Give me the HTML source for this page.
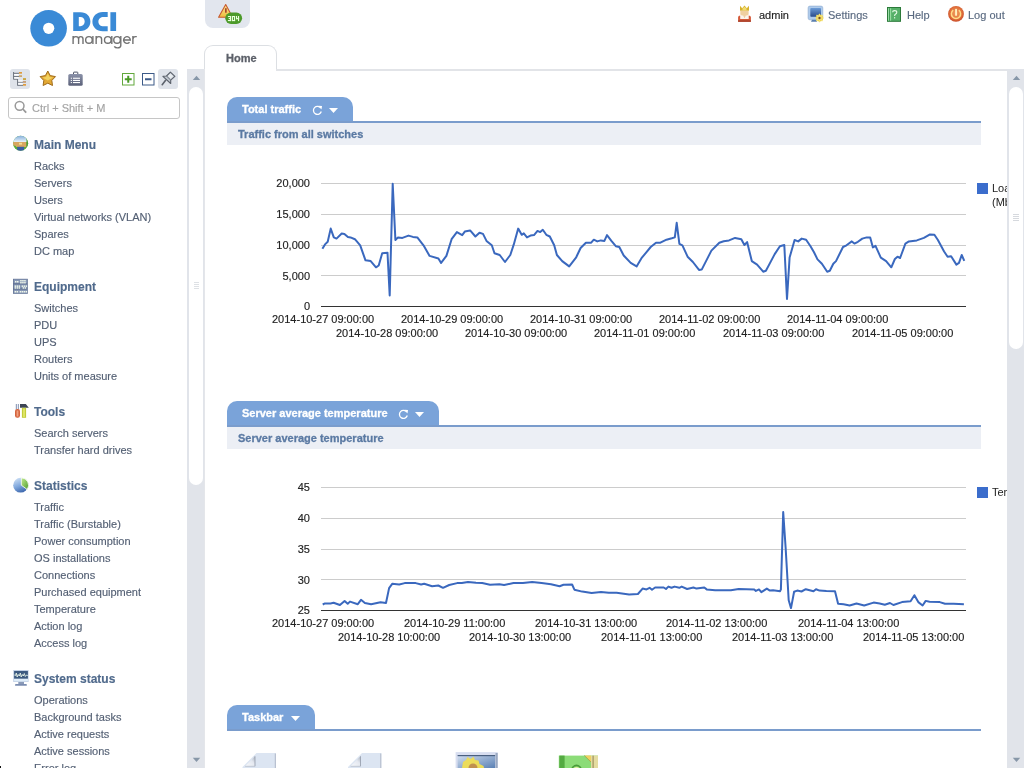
<!DOCTYPE html><html><head><meta charset="utf-8"><style>

*{margin:0;padding:0;box-sizing:border-box}
html,body{width:1024px;height:768px;overflow:hidden;background:#fff;font-family:"Liberation Sans", sans-serif}
.a{position:absolute}
.t{position:absolute;height:0;line-height:0;white-space:nowrap;will-change:transform}
.t span{display:inline-block;line-height:0;vertical-align:baseline}

</style></head><body>
<svg class="a" style="left:0px;top:0px" width="150" height="60" viewBox="0 0 150 60">
<circle cx="48.6" cy="28.3" r="18.3" fill="#3a8ad6"/>
<circle cx="48.7" cy="28.3" r="5.6" fill="#fff"/>
<path fill="#3a8ad6" fill-rule="evenodd" d="M73.2 12.2 H80.6 C86.6 12.2 90.4 16.2 90.4 21.6 C90.4 27 86.6 31 80.6 31 H73.2 Z M78.8 17 H80.3 C83 17 84.7 19 84.7 21.6 C84.7 24.3 83 26.3 80.3 26.3 H78.8 Z"/>
<path fill="#3a8ad6" d="M107.7 17.1 H103.6 C100.6 17.1 98.4 19.1 98.4 21.65 C98.4 24.3 100.6 26.3 103.6 26.3 H107.7 V31.2 H102.8 C96.6 31.2 92.4 27 92.4 21.65 C92.4 16.3 96.6 12 102.8 12 H107.7 Z"/>
<rect x="110.4" y="12.2" width="5.7" height="18.8" fill="#3a8ad6"/>
</svg>
<svg class="a" style="left:60px;top:30px" width="85" height="22" viewBox="60 30 85 22"><g fill="none" stroke="#727272" stroke-width="1.4">
<path d="M73.1 35.9 V44 M73.1 39 Q73.1 36.6 75.85 36.6 Q78.6 36.6 78.6 39 V44 M78.6 39 Q78.6 36.6 80.8 36.6 Q83 36.6 83 39 V44"/>
<circle cx="88.95" cy="39.95" r="3.3"/><path d="M92.9 35.9 V44"/>
<path d="M96.15 35.9 V44 M96.15 39.2 Q96.15 36.6 98.9 36.6 Q101.6 36.6 101.6 39.2 V44"/>
<circle cx="107.8" cy="39.95" r="3.3"/><path d="M111.8 35.9 V44"/>
<circle cx="117.05" cy="39.95" r="3.3"/><path d="M120.8 35.9 V45.5 Q120.8 47.9 117.4 47.9 Q115.2 47.9 114.3 46.4"/>
<path d="M123.6 39.95 H130.3 A3.35 3.35 0 1 0 129.5 42.2"/>
<path d="M132.9 35.9 V44 M132.9 39.2 Q132.9 36.6 135.6 36.6 H136.8"/>
</g></svg>
<div class="a" style="left:205px;top:0;width:45px;height:28px;background:#e2e6ee;border-radius:0 0 8px 8px"></div>
<svg class="a" style="left:205px;top:0px" width="45" height="28" viewBox="205 0 45 28">
<defs><linearGradient id="wt" x1="0" y1="0" x2="0" y2="1"><stop offset="0" stop-color="#fbe89a"/><stop offset="1" stop-color="#eebc3a"/></linearGradient></defs>
<path d="M225.7 4.6 L232.6 17.3 L218.6 17.3 Z" fill="url(#wt)" stroke="#c85a30" stroke-width="1.1" stroke-linejoin="round"/>
<rect x="225" y="8.2" width="1.7" height="4.5" fill="#a8482a"/>
<rect x="225.3" y="12.5" width="16.8" height="11.4" rx="5.7" fill="#4c9a2a"/>
<g fill="#eaffdc">
<rect x="227.9" y="16" width="3.1" height="1.1"/><rect x="228.7" y="18" width="2.3" height="1.1"/><rect x="227.9" y="20" width="3.1" height="1.1"/><rect x="230" y="16" width="1.1" height="5.1"/>
<rect x="231.9" y="16" width="1.1" height="5.1"/><rect x="234" y="16" width="1.1" height="5.1"/><rect x="231.9" y="16" width="3.2" height="1.1"/><rect x="231.9" y="20" width="3.2" height="1.1"/>
<rect x="236" y="16" width="1.1" height="3.2"/><rect x="236" y="18.1" width="3.1" height="1.1"/><rect x="238" y="16" width="1.1" height="5.1"/>
</g>
</svg>
<svg class="a" style="left:736px;top:4px" width="18" height="20" viewBox="736 4 18 20">
<path d="M740 10.8 V5.8 L742.2 8.2 L744.5 5.6 L746.8 8.2 L749 5.8 V10.8 Z" fill="#d6b22e"/>
<path d="M742.5 8.6 L744.5 6.8 L746.5 8.6 V10.5 H742.5 Z" fill="#f2dc70"/>
<path d="M740.3 10.8 H748.6 V14.5 L744.5 18.4 L740.3 14.5 Z" fill="#efcfa0"/>
<path d="M738.1 21.8 V17.2 Q738.1 15.4 740.3 15.4 V19 H748.6 V15.4 Q750.9 15.4 750.9 17.2 V21.8 Z" fill="#d45838"/>
<path d="M740.8 15.4 H743.2 L744.5 18.4 L745.8 15.4 H748.2 V19 H740.8 Z" fill="#fbf3ea"/>
<rect x="738.1" y="20.3" width="12.8" height="1.5" fill="#a8402a"/>
</svg>
<div class="t" style="left:759px;top:15px;font-size:11px;color:#222;font-weight:normal;-webkit-text-stroke:0.15px #222;"><span>admin</span></div>
<svg class="a" style="left:806px;top:5px" width="20" height="19" viewBox="806 5 20 19">
<defs><linearGradient id="sg" x1="0" y1="0" x2="0" y2="1"><stop offset="0" stop-color="#6a9ad6"/><stop offset="1" stop-color="#2a4c8a"/></linearGradient></defs>
<rect x="808.1" y="6.1" width="14.7" height="13.7" rx="1.8" fill="#aecbec" stroke="#8aa8cc" stroke-width="0.6"/>
<rect x="810.3" y="8.1" width="10.7" height="8.6" rx="0.8" fill="url(#sg)"/>
<path d="M811 21.7 L812 19.8 H816.7 L817 21.7 Z" fill="#5a7eae"/>
<circle cx="819.5" cy="18" r="3.6" fill="#ecd24a"/>
<path d="M819.5 13.8 V22.2 M815.3 18 H823.7 M816.5 15 L822.5 21 M822.5 15 L816.5 21" stroke="#f4e27a" stroke-width="1.1"/>
<circle cx="819.5" cy="18" r="1.2" fill="#7a5020"/>
</svg>
<div class="t" style="left:828px;top:15px;font-size:11px;color:#5a6a80;font-weight:normal;-webkit-text-stroke:0.15px #5a6a80;"><span>Settings</span></div>
<svg class="a" style="left:886px;top:6px" width="17" height="18" viewBox="886 6 17 18">
<rect x="887.5" y="7.5" width="13" height="13.8" fill="#56b068" stroke="#2c7a3a" stroke-width="1"/>
<rect x="888.3" y="8.3" width="1" height="12.4" fill="#b8f0c0"/>
<rect x="889.3" y="8.3" width="0.9" height="12.4" fill="#2e8a40"/>
<rect x="890.2" y="8.3" width="0.9" height="12.4" fill="#a8e8b0"/>
<path d="M892.6 12.2 Q892.6 10.6 894.6 10.6 Q896.8 10.6 896.8 12.3 Q896.8 13.5 895.4 14.3 Q894.6 14.8 894.6 16" fill="none" stroke="#e4fae4" stroke-width="1.1"/>
<rect x="894" y="17.2" width="1.2" height="1.2" fill="#e4fae4"/>
</svg>
<div class="t" style="left:907px;top:15px;font-size:11px;color:#5a6a80;font-weight:normal;-webkit-text-stroke:0.15px #5a6a80;"><span>Help</span></div>
<svg class="a" style="left:946px;top:4px" width="20" height="20" viewBox="946 4 20 20">
<defs><radialGradient id="lg" cx="0.5" cy="0.45" r="0.55"><stop offset="0" stop-color="#f2a060"/><stop offset="0.7" stop-color="#e0703a"/><stop offset="1" stop-color="#c84a28"/></radialGradient></defs>
<circle cx="956" cy="13.9" r="7.9" fill="url(#lg)"/>
<path d="M953.2 10.2 A4.6 4.6 0 1 0 958.8 10.2" fill="none" stroke="#ffdc88" stroke-width="1.5"/>
<rect x="955.1" y="8.9" width="1.9" height="6.8" fill="#fff0c0"/>
</svg>
<div class="t" style="left:968px;top:15px;font-size:11px;color:#5a6a80;font-weight:normal;-webkit-text-stroke:0.15px #5a6a80;"><span>Log out</span></div>
<div class="a" style="left:10px;top:69px;width:20px;height:20px;background:#dfe3ea;border-radius:3px"></div>
<svg class="a" style="left:10px;top:69px" width="20" height="20" viewBox="10 69 20 20">
<path d="M13.6 72 V79.4 M13.6 73.3 H19 M13.6 76.4 H19 M13.6 79.2 H17.6 M17.6 79 V85.6 M17.6 82.1 H23 M17.6 85.3 H23" stroke="#6b717c" stroke-width="1" fill="none"/>
<rect x="14.2" y="74" width="4.5" height="1.6" fill="#fff"/><rect x="14.2" y="77.2" width="4.5" height="1.4" fill="#fff"/>
<rect x="18.2" y="80.3" width="4.5" height="1.4" fill="#fff"/><rect x="18.2" y="83.1" width="4.5" height="1.5" fill="#fff"/>
<rect x="19" y="72" width="3" height="1.7" fill="#e09c3c"/><rect x="19" y="75.3" width="3" height="1.6" fill="#c8a060"/>
<rect x="23" y="78.2" width="3" height="1.7" fill="#c8a030"/><rect x="23" y="81.2" width="3" height="1.5" fill="#c09060"/><rect x="23" y="84" width="3" height="1.7" fill="#e09c3c"/>
</svg>
<svg class="a" style="left:38px;top:69px" width="20" height="19" viewBox="38 69 20 19">
<path d="M47.8 71 L50.2 75.6 L55.5 76.6 L51.8 80.5 L52.5 85.5 L47.8 83.2 L43.1 85.5 L43.8 80.5 L40.1 76.6 L45.4 75.6 Z" fill="#e2a834" stroke="#a06c1c" stroke-width="1" stroke-linejoin="round"/>
<path d="M47.8 73.5 L49.6 76.9 L53.2 77.5 L47.8 80.5 L42.4 77.5 L46 76.9 Z" fill="#f6dc6a" opacity="0.8"/>
</svg>
<svg class="a" style="left:66px;top:70px" width="19" height="18" viewBox="66 70 19 18">
<path d="M73.5 74 V72.6 Q73.5 72.1 74 72.1 H77.3 Q77.8 72.1 77.8 72.6 V74" fill="none" stroke="#4e5468" stroke-width="1"/>
<defs><linearGradient id="bc" x1="0" y1="0" x2="0" y2="1"><stop offset="0" stop-color="#8c93aa"/><stop offset="1" stop-color="#5a6078"/></linearGradient></defs><rect x="68.3" y="73.9" width="14.4" height="11.9" rx="1.6" fill="url(#bc)"/>

<rect x="70.8" y="77.7" width="1.1" height="1.1" fill="#fff"/><rect x="73" y="77.7" width="7" height="1.1" fill="#fff"/>
<rect x="70.8" y="79.9" width="1.1" height="1.1" fill="#fff"/><rect x="73" y="79.9" width="7" height="1.1" fill="#fff"/>
<rect x="70.8" y="82" width="1.1" height="1.1" fill="#fff"/><rect x="73" y="82" width="7" height="1.1" fill="#fff"/>
</svg>
<svg class="a" style="left:121px;top:72px" width="15" height="15" viewBox="121 72 15 15">
<rect x="122.5" y="73.5" width="11.5" height="11.5" fill="#fff" stroke="#62a83c" stroke-width="1"/>
<path d="M128.25 75.8 V82.7 M124.8 79.25 H131.7" stroke="#4a9a26" stroke-width="2"/>
</svg>
<svg class="a" style="left:141px;top:72px" width="15" height="15" viewBox="141 72 15 15">
<rect x="142.5" y="73.5" width="11.5" height="11.5" fill="#fff" stroke="#3c5a88" stroke-width="1"/>
<path d="M145 79.25 H151.5" stroke="#3c5a88" stroke-width="2"/>
</svg>
<div class="a" style="left:158px;top:69px;width:20px;height:20px;background:#dfe3ea;border-radius:3px"></div>
<svg class="a" style="left:158px;top:69px" width="20" height="20" viewBox="158 69 20 20">
<path d="M162.9 76.3 L166.5 76 L170.4 72.1 L174.9 76.3 L170.7 80.1 L170.7 83.5 Z" fill="#c4cad2" stroke="#5c626c" stroke-width="1.1" stroke-linejoin="round"/>
<path d="M166.5 76 L170.7 80.1" stroke="#5c626c" stroke-width="0.9"/>
<path d="M170.4 73.6 L173.3 76.3 L170.6 78.8 L167.9 76.1 Z" fill="#e8ecf0"/>
<path d="M165.6 80.3 L162.2 84.7" stroke="#5c626c" stroke-width="1.6" stroke-linecap="round"/>
</svg>
<div class="a" style="left:8px;top:97px;width:172px;height:22px;border:1px solid #c6c6c6;border-radius:3px;background:#fff"></div>
<svg class="a" style="left:12px;top:99px" width="18" height="18" viewBox="12 99 18 18">
<circle cx="19.6" cy="105.8" r="4.4" fill="none" stroke="#999" stroke-width="1.5"/>
<path d="M22.8 109 L26.2 112.6" stroke="#999" stroke-width="1.8"/>
</svg>
<div class="t" style="left:32px;top:108px;font-size:11px;color:#a3a3a3;font-weight:normal;-webkit-text-stroke:0.15px #a3a3a3;"><span>Ctrl + Shift + M</span></div>
<svg class="a" style="left:12px;top:134px" width="18" height="18" viewBox="12 134 18 18">
<defs><clipPath id="cm"><circle cx="20.6" cy="143.3" r="7.45"/></clipPath>
<linearGradient id="sky" x1="0" y1="0" x2="0" y2="1"><stop offset="0" stop-color="#7aa8d8"/><stop offset="1" stop-color="#e8f2fa"/></linearGradient></defs>
<g clip-path="url(#cm)">
<rect x="12" y="134" width="18" height="18" fill="#5aa83e"/>
<rect x="12" y="135" width="15" height="7" fill="url(#sky)"/>
<rect x="13" y="142" width="13.5" height="5" fill="#d8a660"/>
<rect x="19" y="142.8" width="3" height="1.8" fill="#f4dc90"/>
<rect x="17.2" y="146.8" width="6.8" height="5" fill="#3a5ea2"/>
<path d="M24.5 135 Q26.5 137 26.5 139 V148 L30 148 V134 Z" fill="#4a9a34"/>
<path d="M12 145 L16 146 L17.2 152 H12 Z" fill="#5ab03e"/>
</g></svg>
<div class="t" style="left:34px;top:145px;font-size:12px;color:#506a8c;font-weight:bold;-webkit-text-stroke:0.15px #506a8c;"><span>Main Menu</span></div>
<div class="t" style="left:34px;top:166px;font-size:11px;color:#546074;font-weight:normal;-webkit-text-stroke:0.15px #546074;"><span>Racks</span></div>
<div class="t" style="left:34px;top:183px;font-size:11px;color:#546074;font-weight:normal;-webkit-text-stroke:0.15px #546074;"><span>Servers</span></div>
<div class="t" style="left:34px;top:200px;font-size:11px;color:#546074;font-weight:normal;-webkit-text-stroke:0.15px #546074;"><span>Users</span></div>
<div class="t" style="left:34px;top:217px;font-size:11px;color:#546074;font-weight:normal;-webkit-text-stroke:0.15px #546074;"><span>Virtual networks (VLAN)</span></div>
<div class="t" style="left:34px;top:234px;font-size:11px;color:#546074;font-weight:normal;-webkit-text-stroke:0.15px #546074;"><span>Spares</span></div>
<div class="t" style="left:34px;top:251px;font-size:11px;color:#546074;font-weight:normal;-webkit-text-stroke:0.15px #546074;"><span>DC map</span></div>
<svg class="a" style="left:12px;top:278px" width="17" height="17" viewBox="12 278 17 17">
<rect x="13" y="278.8" width="14.8" height="15" fill="#5f6f90"/>
<rect x="13.6" y="279.3" width="13.6" height="4" fill="#8898b6"/>
<rect x="13.6" y="284.3" width="13.6" height="4.2" fill="#7f90b0"/>
<rect x="13.6" y="289.6" width="13.6" height="3.8" fill="#8898b6"/>
<rect x="20.2" y="280" width="1.5" height="1.5" fill="#f0f8ea"/><rect x="22.2" y="280" width="1.5" height="1.5" fill="#f0f8ea"/><rect x="24.2" y="280" width="1.5" height="1.5" fill="#f0f8ea"/><rect x="20.2" y="282" width="1.5" height="1.5" fill="#f0f8ea"/><rect x="22.2" y="282" width="1.5" height="1.5" fill="#f0f8ea"/><rect x="24.2" y="282" width="1.5" height="1.5" fill="#f0f8ea"/><rect x="15" y="281" width="1.5" height="1.5" fill="#f0f8ea"/><rect x="17" y="281" width="1.5" height="1.5" fill="#f0f8ea"/><rect x="14.6" y="285.4" width="1.5" height="1.5" fill="#f0f8ea"/><rect x="16.6" y="285.4" width="1.5" height="1.5" fill="#f0f8ea"/><rect x="18.6" y="285.4" width="1.5" height="1.5" fill="#f0f8ea"/><rect x="14.6" y="287.2" width="1.5" height="1.5" fill="#f0f8ea"/><rect x="16.6" y="287.2" width="1.5" height="1.5" fill="#f0f8ea"/><rect x="18.6" y="287.2" width="1.5" height="1.5" fill="#f0f8ea"/><rect x="21.6" y="285.4" width="1.5" height="1.5" fill="#f0f8ea"/><rect x="23.6" y="285.4" width="1.5" height="1.5" fill="#f0f8ea"/><rect x="25.6" y="285.4" width="1.5" height="1.5" fill="#f0f8ea"/><rect x="22.6" y="287.2" width="1.5" height="1.5" fill="#f0f8ea"/><rect x="24.6" y="287.2" width="1.5" height="1.5" fill="#f0f8ea"/><rect x="14.6" y="291" width="1.5" height="1.5" fill="#f0f8ea"/><rect x="16.6" y="291" width="1.5" height="1.5" fill="#f0f8ea"/><rect x="19.6" y="291" width="1.5" height="1.5" fill="#f0f8ea"/><rect x="21.6" y="291" width="1.5" height="1.5" fill="#f0f8ea"/><rect x="23.6" y="291" width="1.5" height="1.5" fill="#f0f8ea"/><rect x="25.6" y="291" width="1.5" height="1.5" fill="#f0f8ea"/></svg>
<div class="t" style="left:34px;top:287px;font-size:12px;color:#506a8c;font-weight:bold;-webkit-text-stroke:0.15px #506a8c;"><span>Equipment</span></div>
<div class="t" style="left:34px;top:308px;font-size:11px;color:#546074;font-weight:normal;-webkit-text-stroke:0.15px #546074;"><span>Switches</span></div>
<div class="t" style="left:34px;top:325px;font-size:11px;color:#546074;font-weight:normal;-webkit-text-stroke:0.15px #546074;"><span>PDU</span></div>
<div class="t" style="left:34px;top:342px;font-size:11px;color:#546074;font-weight:normal;-webkit-text-stroke:0.15px #546074;"><span>UPS</span></div>
<div class="t" style="left:34px;top:359px;font-size:11px;color:#546074;font-weight:normal;-webkit-text-stroke:0.15px #546074;"><span>Routers</span></div>
<div class="t" style="left:34px;top:376px;font-size:11px;color:#546074;font-weight:normal;-webkit-text-stroke:0.15px #546074;"><span>Units of measure</span></div>
<svg class="a" style="left:13px;top:403px" width="17" height="16" viewBox="13 403 17 16">
<rect x="15.8" y="404" width="1.1" height="5.5" fill="#8a9ab8"/><rect x="17.8" y="404" width="1.1" height="5.5" fill="#8a9ab8"/>
<rect x="15" y="409" width="5" height="8.8" rx="2.2" fill="#d4643e"/>
<rect x="16.6" y="410.5" width="1.8" height="6" fill="#f0a080"/>
<path d="M20 404 H25.8 L28.8 407.8 H20 Z" fill="#3c4454"/>
<rect x="21.9" y="407.8" width="4.2" height="10" fill="#c2cc3a"/>
<rect x="23.2" y="408.5" width="1.6" height="8.5" fill="#e4ea70"/>
</svg>
<div class="t" style="left:34px;top:412px;font-size:12px;color:#506a8c;font-weight:bold;-webkit-text-stroke:0.15px #506a8c;"><span>Tools</span></div>
<div class="t" style="left:34px;top:433px;font-size:11px;color:#546074;font-weight:normal;-webkit-text-stroke:0.15px #546074;"><span>Search servers</span></div>
<div class="t" style="left:34px;top:450px;font-size:11px;color:#546074;font-weight:normal;-webkit-text-stroke:0.15px #546074;"><span>Transfer hard drives</span></div>
<svg class="a" style="left:12px;top:476px" width="18" height="18" viewBox="12 476 18 18">
<defs><linearGradient id="pb" x1="0.2" y1="0" x2="0.6" y2="1"><stop offset="0" stop-color="#d0e2f6"/><stop offset="0.55" stop-color="#7ea6dc"/><stop offset="1" stop-color="#3c66ac"/></linearGradient>
<linearGradient id="pg" x1="0" y1="0" x2="1" y2="1"><stop offset="0" stop-color="#c4ec90"/><stop offset="1" stop-color="#4c9c2c"/></linearGradient></defs>
<circle cx="20.6" cy="485.2" r="7.4" fill="url(#pb)"/>
<path d="M21.3 477.8 A7.4 7.4 0 0 1 27.2 489.5 L21.3 485.2 Z" fill="url(#pg)" stroke="#fff" stroke-width="0.8"/>
</svg>
<div class="t" style="left:34px;top:486px;font-size:12px;color:#506a8c;font-weight:bold;-webkit-text-stroke:0.15px #506a8c;"><span>Statistics</span></div>
<div class="t" style="left:34px;top:507px;font-size:11px;color:#546074;font-weight:normal;-webkit-text-stroke:0.15px #546074;"><span>Traffic</span></div>
<div class="t" style="left:34px;top:524px;font-size:11px;color:#546074;font-weight:normal;-webkit-text-stroke:0.15px #546074;"><span>Traffic (Burstable)</span></div>
<div class="t" style="left:34px;top:541px;font-size:11px;color:#546074;font-weight:normal;-webkit-text-stroke:0.15px #546074;"><span>Power consumption</span></div>
<div class="t" style="left:34px;top:558px;font-size:11px;color:#546074;font-weight:normal;-webkit-text-stroke:0.15px #546074;"><span>OS installations</span></div>
<div class="t" style="left:34px;top:575px;font-size:11px;color:#546074;font-weight:normal;-webkit-text-stroke:0.15px #546074;"><span>Connections</span></div>
<div class="t" style="left:34px;top:592px;font-size:11px;color:#546074;font-weight:normal;-webkit-text-stroke:0.15px #546074;"><span>Purchased equipment</span></div>
<div class="t" style="left:34px;top:609px;font-size:11px;color:#546074;font-weight:normal;-webkit-text-stroke:0.15px #546074;"><span>Temperature</span></div>
<div class="t" style="left:34px;top:626px;font-size:11px;color:#546074;font-weight:normal;-webkit-text-stroke:0.15px #546074;"><span>Action log</span></div>
<div class="t" style="left:34px;top:643px;font-size:11px;color:#546074;font-weight:normal;-webkit-text-stroke:0.15px #546074;"><span>Access log</span></div>
<svg class="a" style="left:12px;top:669px" width="18" height="18" viewBox="12 669 18 18">
<rect x="13.2" y="670" width="15.4" height="12" fill="#c4d2e6"/>
<rect x="14.1" y="671" width="13.8" height="7.8" fill="#3c5a80"/>
<rect x="14.1" y="678.8" width="13.8" height="2.4" fill="#e0eefa"/>
<path d="M14.3 675 L15.5 675.5 L16.3 673 L17.2 677 L18.2 674.5 L19.3 676 L20.3 673 L21.2 677 L22.3 674.5 L23.3 676 L24.3 673.5 L25.3 676.5 L26.5 675 L27.8 675.5" stroke="#e8f4e8" stroke-width="0.9" fill="none"/>
<rect x="18.3" y="682" width="5.7" height="2" fill="#8a9ab8"/>
<rect x="15" y="684" width="11.9" height="1.8" rx="0.9" fill="#7a8cb0"/>
</svg>
<div class="t" style="left:34px;top:679px;font-size:12px;color:#506a8c;font-weight:bold;-webkit-text-stroke:0.15px #506a8c;"><span>System status</span></div>
<div class="t" style="left:34px;top:700px;font-size:11px;color:#546074;font-weight:normal;-webkit-text-stroke:0.15px #546074;"><span>Operations</span></div>
<div class="t" style="left:34px;top:717px;font-size:11px;color:#546074;font-weight:normal;-webkit-text-stroke:0.15px #546074;"><span>Background tasks</span></div>
<div class="t" style="left:34px;top:734px;font-size:11px;color:#546074;font-weight:normal;-webkit-text-stroke:0.15px #546074;"><span>Active requests</span></div>
<div class="t" style="left:34px;top:751px;font-size:11px;color:#546074;font-weight:normal;-webkit-text-stroke:0.15px #546074;"><span>Active sessions</span></div>
<div class="t" style="left:34px;top:768px;font-size:11px;color:#546074;font-weight:normal;-webkit-text-stroke:0.15px #546074;"><span>Error log</span></div>
<div class="a" style="left:187px;top:69px;width:18px;height:699px;background:#e1e4ea"></div>
<div class="a" style="left:189px;top:87px;width:14px;height:398px;background:#fff;border-radius:7px"></div>
<svg class="a" style="left:187px;top:69px" width="18" height="699" viewBox="187 69 18 699">
<path d="M192.8 80 L196.5 75.8 L200.2 80 Z" fill="#8797a8"/>
<path d="M192.8 757.8 L196.5 762 L200.2 757.8 Z" fill="#8797a8"/>
<path d="M194 282.5 H199 M194 284.5 H199 M194 286.5 H199 M194 288.5 H199" stroke="#d0d4da" stroke-width="0.7"/>
</svg>
<div class="a" style="left:204px;top:45px;width:73px;height:26px;border:1px solid #dcdfe3;border-bottom:none;border-radius:9px 9px 0 0;background:#fff"></div>
<div class="a" style="left:276px;top:69px;width:731px;height:2px;background:#e2e4e8"></div>
<div class="a" style="left:204px;top:69px;width:1px;height:699px;background:#e4e6ea"></div>
<div class="t" style="left:226px;top:58px;font-size:11px;color:#5c6069;font-weight:bold;-webkit-text-stroke:0.3px #5c6069;"><span>Home</span></div>
<div class="a" style="left:1007px;top:69px;width:17px;height:699px;background:#e1e4ea"></div>
<div class="a" style="left:1009px;top:87px;width:14px;height:262px;background:#fff;border-radius:7px"></div>
<svg class="a" style="left:1007px;top:69px" width="17" height="699" viewBox="1007 69 17 699">
<path d="M1012.8 80 L1016.5 75.8 L1020.2 80 Z" fill="#8797a8"/>
<path d="M1012.8 757.8 L1016.5 762 L1020.2 757.8 Z" fill="#8797a8"/>
<path d="M1013 214.5 H1019 M1013 216.5 H1019 M1013 218.5 H1019 M1013 220.5 H1019" stroke="#c4c8d0" stroke-width="0.7"/>
</svg>
<div class="a" style="left:227px;top:97px;width:126px;height:24px;background:#7aa3d9;border-radius:10px 10px 0 0"></div>
<div class="a" style="left:227px;top:121px;width:754px;height:2px;background:#7a9ccc"></div>
<div class="a" style="left:227px;top:123px;width:754px;height:22px;background:#eceff5"></div>
<div class="t" style="left:238px;top:134px;font-size:11px;color:#5b7aa3;font-weight:bold;-webkit-text-stroke:0.3px #5b7aa3;"><span>Traffic from all switches</span></div>
<div class="t" style="left:242px;top:109px;font-size:11px;color:#fff;font-weight:bold;-webkit-text-stroke:0.3px #fff;"><span>Total traffic</span></div>
<svg class="a" style="left:312px;top:105px" width="11" height="11" viewBox="0 0 11 11">
<path d="M8.8 3.2 A4 4 0 1 0 9.3 6.5" fill="none" stroke="#fff" stroke-width="1.3"/>
<path d="M6.5 0.8 L10 1 L9.5 4.6 Z" fill="#fff"/>
</svg>
<svg class="a" style="left:328px;top:107px" width="11" height="7" viewBox="0 0 11 7">
<path d="M1 1 L10 1 L5.5 6 Z" fill="#fff"/>
</svg>
<div class="a" style="left:227px;top:401px;width:212px;height:24px;background:#7aa3d9;border-radius:10px 10px 0 0"></div>
<div class="a" style="left:227px;top:425px;width:754px;height:2px;background:#7a9ccc"></div>
<div class="a" style="left:227px;top:427px;width:754px;height:22px;background:#eceff5"></div>
<div class="t" style="left:238px;top:438px;font-size:11px;color:#5b7aa3;font-weight:bold;-webkit-text-stroke:0.3px #5b7aa3;"><span>Server average temperature</span></div>
<div class="t" style="left:242px;top:413px;font-size:11px;color:#fff;font-weight:bold;-webkit-text-stroke:0.3px #fff;"><span>Server average temperature</span></div>
<svg class="a" style="left:398px;top:409px" width="11" height="11" viewBox="0 0 11 11">
<path d="M8.8 3.2 A4 4 0 1 0 9.3 6.5" fill="none" stroke="#fff" stroke-width="1.3"/>
<path d="M6.5 0.8 L10 1 L9.5 4.6 Z" fill="#fff"/>
</svg>
<svg class="a" style="left:414px;top:411px" width="11" height="7" viewBox="0 0 11 7">
<path d="M1 1 L10 1 L5.5 6 Z" fill="#fff"/>
</svg>
<div class="a" style="left:227px;top:705px;width:88px;height:24px;background:#7aa3d9;border-radius:10px 10px 0 0"></div>
<div class="a" style="left:227px;top:729px;width:754px;height:2px;background:#7a9ccc"></div>
<div class="t" style="left:242px;top:717px;font-size:11px;color:#fff;font-weight:bold;-webkit-text-stroke:0.3px #fff;"><span>Taskbar</span></div>
<svg class="a" style="left:290px;top:715px" width="11" height="7" viewBox="0 0 11 7">
<path d="M1 1 L10 1 L5.5 6 Z" fill="#fff"/>
</svg>
<svg class="a" style="left:0;top:0" width="1007" height="768" viewBox="0 0 1007 768">
<rect x="321" y="183" width="645" height="1" fill="#cccccc"/>
<rect x="321" y="214" width="645" height="1" fill="#cccccc"/>
<rect x="321" y="245" width="645" height="1" fill="#cccccc"/>
<rect x="321" y="275" width="645" height="1" fill="#cccccc"/>
<rect x="321" y="306" width="645" height="1" fill="#333"/>
<path d="M322.4 248.8 L325.0 244.4 L327.7 241.8 L330.7 228.6 L333.8 237.4 L336.5 238.6 L341.7 233.5 L344.4 233.9 L347.9 237.0 L350.5 237.4 L354.9 239.2 L360.2 245.3 L365.5 260.3 L370.7 261.1 L376.0 267.3 L378.7 265.5 L382.2 253.2 L387.5 252.7 L389.7 295.4 L392.7 183.8 L395.4 240.0 L398.0 237.4 L402.4 237.9 L408.5 235.6 L412.9 236.9 L417.3 237.4 L423.5 245.3 L429.6 255.9 L438.4 258.5 L441.1 262.9 L446.4 255.9 L451.6 239.2 L456.9 232.1 L462.2 235.1 L464.8 231.6 L470.1 230.4 L475.4 236.5 L479.5 232.7 L483.0 233.9 L486.5 240.9 L491.8 245.3 L494.5 253.2 L499.7 255.0 L505.0 262.0 L510.3 255.0 L513.8 244.4 L518.2 228.6 L521.7 234.8 L523.8 233.4 L527.0 237.4 L530.5 235.6 L534.0 235.1 L537.5 230.9 L540.2 232.1 L542.8 229.8 L546.3 234.8 L549.8 236.5 L554.2 245.3 L556.9 255.0 L562.2 261.1 L569.2 266.4 L576.2 257.3 L580.6 248.0 L585.9 242.7 L591.2 242.7 L593.8 239.7 L597.3 241.4 L600.8 240.4 L604.4 240.9 L607.0 235.1 L611.4 240.9 L615.8 246.2 L619.3 247.0 L623.7 255.5 L630.7 262.9 L636.6 266.4 L641.9 257.6 L646.3 252.3 L650.7 247.0 L656.0 242.7 L660.4 242.7 L666.5 239.7 L671.8 238.3 L674.8 237.4 L676.7 222.8 L679.4 243.9 L682.4 245.3 L687.6 256.7 L692.9 262.0 L699.0 269.9 L701.7 269.6 L711.4 250.6 L719.3 242.7 L723.7 241.3 L729.0 240.4 L735.1 237.9 L741.3 239.2 L744.4 245.0 L747.1 242.1 L751.8 261.1 L757.1 264.6 L763.2 271.7 L765.9 270.8 L774.7 254.1 L779.9 246.2 L784.3 245.0 L787.0 298.9 L789.6 257.6 L794.6 240.0 L798.2 241.4 L801.7 238.6 L806.1 239.7 L810.5 246.2 L814.0 252.3 L817.5 259.4 L821.9 263.8 L827.2 271.7 L829.8 270.8 L833.3 263.8 L836.0 261.1 L843.0 247.0 L846.5 245.3 L851.8 241.4 L854.4 243.6 L857.9 241.8 L862.3 238.6 L866.7 237.4 L870.2 237.4 L872.9 247.4 L875.5 245.8 L880.8 257.6 L886.1 261.1 L891.3 267.3 L894.9 259.0 L897.5 256.7 L900.1 258.0 L905.4 243.6 L908.9 241.4 L916.8 240.4 L923.9 237.9 L930.0 234.4 L934.4 234.8 L937.9 240.0 L944.1 251.5 L947.6 256.7 L951.1 256.2 L956.4 264.6 L959.0 262.9 L961.7 255.0 L964.3 260.8" fill="none" stroke="#3a68be" stroke-width="2" stroke-linejoin="round"/>
<rect x="977" y="183" width="11" height="11" fill="#3b6dcc"/>
</svg>
<div class="t" style="left:0;width:310px;text-align:right;top:183px;font-size:11px;color:#222;-webkit-text-stroke:0.15px #222"><span>20,000</span></div>
<div class="t" style="left:0;width:310px;text-align:right;top:214px;font-size:11px;color:#222;-webkit-text-stroke:0.15px #222"><span>15,000</span></div>
<div class="t" style="left:0;width:310px;text-align:right;top:245px;font-size:11px;color:#222;-webkit-text-stroke:0.15px #222"><span>10,000</span></div>
<div class="t" style="left:0;width:310px;text-align:right;top:276px;font-size:11px;color:#222;-webkit-text-stroke:0.15px #222"><span>5,000</span></div>
<div class="t" style="left:0;width:310px;text-align:right;top:306px;font-size:11px;color:#222;-webkit-text-stroke:0.15px #222"><span>0</span></div>
<div class="t" style="left:272.2px;top:319px;font-size:11px;color:#222;font-weight:normal;-webkit-text-stroke:0.15px #222;"><span>2014-10-27 09:00:00</span></div>
<div class="t" style="left:400.9px;top:319px;font-size:11px;color:#222;font-weight:normal;-webkit-text-stroke:0.15px #222;"><span>2014-10-29 09:00:00</span></div>
<div class="t" style="left:529.6px;top:319px;font-size:11px;color:#222;font-weight:normal;-webkit-text-stroke:0.15px #222;"><span>2014-10-31 09:00:00</span></div>
<div class="t" style="left:658.5px;top:319px;font-size:11px;color:#222;font-weight:normal;-webkit-text-stroke:0.15px #222;"><span>2014-11-02 09:00:00</span></div>
<div class="t" style="left:787.3px;top:319px;font-size:11px;color:#222;font-weight:normal;-webkit-text-stroke:0.15px #222;"><span>2014-11-04 09:00:00</span></div>
<div class="t" style="left:336.4px;top:333px;font-size:11px;color:#222;font-weight:normal;-webkit-text-stroke:0.15px #222;"><span>2014-10-28 09:00:00</span></div>
<div class="t" style="left:465px;top:333px;font-size:11px;color:#222;font-weight:normal;-webkit-text-stroke:0.15px #222;"><span>2014-10-30 09:00:00</span></div>
<div class="t" style="left:593.8px;top:333px;font-size:11px;color:#222;font-weight:normal;-webkit-text-stroke:0.15px #222;"><span>2014-11-01 09:00:00</span></div>
<div class="t" style="left:722.5px;top:333px;font-size:11px;color:#222;font-weight:normal;-webkit-text-stroke:0.15px #222;"><span>2014-11-03 09:00:00</span></div>
<div class="t" style="left:852px;top:333px;font-size:11px;color:#222;font-weight:normal;-webkit-text-stroke:0.15px #222;"><span>2014-11-05 09:00:00</span></div>
<div class="a" style="left:992px;top:181px;width:15px;height:40px;overflow:hidden"><div style="width:80px;font-size:11px;line-height:14px;color:#222;white-space:nowrap">Load<br>(Mbit/s)</div></div>
<svg class="a" style="left:0;top:0" width="1007" height="768" viewBox="0 0 1007 768">
<rect x="321" y="487" width="645" height="1" fill="#cccccc"/>
<rect x="321" y="518" width="645" height="1" fill="#cccccc"/>
<rect x="321" y="549" width="645" height="1" fill="#cccccc"/>
<rect x="321" y="579" width="645" height="1" fill="#cccccc"/>
<rect x="321" y="610" width="645" height="1" fill="#333"/>
<path d="M322.7 604.5 L325.0 603.4 L330.5 603.4 L333.6 602.7 L339.9 605.0 L344.6 601.0 L347.7 603.8 L350.0 601.6 L357.8 604.2 L361.0 599.8 L364.9 603.0 L371.1 604.2 L380.5 602.2 L386.0 603.0 L389.1 588.1 L392.2 583.8 L399.2 584.5 L404.7 583.1 L415.7 583.1 L421.1 584.5 L424.2 583.8 L432.1 586.2 L438.3 585.5 L443.0 587.8 L449.2 585.0 L457.1 583.1 L461.8 583.1 L468.0 581.9 L476.0 582.7 L482.2 583.1 L490.0 584.7 L499.4 584.2 L504.1 585.0 L513.5 583.1 L522.9 583.1 L532.2 581.9 L541.6 583.1 L551.0 584.2 L559.6 586.2 L563.5 584.7 L572.1 584.5 L574.4 589.7 L582.2 591.6 L591.6 593.1 L601.0 592.0 L608.8 592.8 L616.6 592.8 L629.1 594.4 L637.9 594.0 L642.6 588.6 L646.5 589.4 L649.6 587.8 L652.0 589.7 L655.1 587.5 L663.7 587.5 L666.0 589.0 L668.4 586.6 L671.5 587.8 L674.6 586.6 L679.3 587.8 L681.7 586.6 L687.1 589.0 L693.4 587.5 L696.5 588.6 L704.3 587.5 L706.7 589.4 L715.2 590.2 L724.6 590.2 L730.9 590.2 L738.7 589.0 L754.3 589.4 L755.9 590.9 L759.0 589.4 L761.3 592.2 L766.8 588.6 L769.9 590.6 L773.1 590.2 L780.1 591.2 L780.9 589.4 L783.2 512.0 L785.6 547.2 L788.7 600.3 L791.0 608.1 L794.1 591.8 L797.2 590.6 L801.5 591.5 L805.8 589.2 L813.5 591.3 L816.0 589.2 L819.5 590.6 L826.4 591.0 L835.0 591.3 L838.1 603.8 L843.6 604.3 L849.6 605.5 L856.5 603.5 L864.2 605.5 L873.6 602.6 L879.7 603.5 L884.8 604.7 L890.0 603.0 L893.4 605.0 L902.0 602.1 L910.6 601.2 L914.4 595.2 L918.3 602.1 L922.6 605.5 L925.7 600.9 L929.5 601.8 L939.8 602.1 L945.0 603.8 L953.6 603.8 L963.9 604.3" fill="none" stroke="#3a68be" stroke-width="2" stroke-linejoin="round"/>
<rect x="977" y="487" width="11" height="11" fill="#3b6dcc"/>
</svg>
<div class="t" style="left:0;width:310px;text-align:right;top:487px;font-size:11px;color:#222;-webkit-text-stroke:0.15px #222"><span>45</span></div>
<div class="t" style="left:0;width:310px;text-align:right;top:518px;font-size:11px;color:#222;-webkit-text-stroke:0.15px #222"><span>40</span></div>
<div class="t" style="left:0;width:310px;text-align:right;top:549px;font-size:11px;color:#222;-webkit-text-stroke:0.15px #222"><span>35</span></div>
<div class="t" style="left:0;width:310px;text-align:right;top:580px;font-size:11px;color:#222;-webkit-text-stroke:0.15px #222"><span>30</span></div>
<div class="t" style="left:0;width:310px;text-align:right;top:610px;font-size:11px;color:#222;-webkit-text-stroke:0.15px #222"><span>25</span></div>
<div class="t" style="left:272.3px;top:623px;font-size:11px;color:#222;font-weight:normal;-webkit-text-stroke:0.15px #222;"><span>2014-10-27 09:00:00</span></div>
<div class="t" style="left:403.5px;top:623px;font-size:11px;color:#222;font-weight:normal;-webkit-text-stroke:0.15px #222;"><span>2014-10-29 11:00:00</span></div>
<div class="t" style="left:535.3px;top:623px;font-size:11px;color:#222;font-weight:normal;-webkit-text-stroke:0.15px #222;"><span>2014-10-31 13:00:00</span></div>
<div class="t" style="left:666.2px;top:623px;font-size:11px;color:#222;font-weight:normal;-webkit-text-stroke:0.15px #222;"><span>2014-11-02 13:00:00</span></div>
<div class="t" style="left:797.5px;top:623px;font-size:11px;color:#222;font-weight:normal;-webkit-text-stroke:0.15px #222;"><span>2014-11-04 13:00:00</span></div>
<div class="t" style="left:338px;top:637px;font-size:11px;color:#222;font-weight:normal;-webkit-text-stroke:0.15px #222;"><span>2014-10-28 10:00:00</span></div>
<div class="t" style="left:469.2px;top:637px;font-size:11px;color:#222;font-weight:normal;-webkit-text-stroke:0.15px #222;"><span>2014-10-30 13:00:00</span></div>
<div class="t" style="left:600.7px;top:637px;font-size:11px;color:#222;font-weight:normal;-webkit-text-stroke:0.15px #222;"><span>2014-11-01 13:00:00</span></div>
<div class="t" style="left:732px;top:637px;font-size:11px;color:#222;font-weight:normal;-webkit-text-stroke:0.15px #222;"><span>2014-11-03 13:00:00</span></div>
<div class="t" style="left:863.4px;top:637px;font-size:11px;color:#222;font-weight:normal;-webkit-text-stroke:0.15px #222;"><span>2014-11-05 13:00:00</span></div>
<div class="a" style="left:992px;top:485px;width:15px;height:40px;overflow:hidden"><div style="width:80px;font-size:11px;line-height:14px;color:#222;white-space:nowrap">Temperature</div></div>
<svg class="a" style="left:241px;top:751px" width="36" height="17" viewBox="241 751 36 17">
<defs><linearGradient id="pf242" x1="0" y1="1" x2="1" y2="0"><stop offset="0" stop-color="#f8f9fc"/><stop offset="0.6" stop-color="#e4e8f0"/><stop offset="1" stop-color="#a8b0bc"/></linearGradient></defs>
<path d="M256.5 753 H275.8 V768 H242.5 V767 Z" fill="#dce5f2"/>
<path d="M275.3 753.5 V768" stroke="#b0b8c8" stroke-width="1"/>
<path d="M255.0 756.3 V766.3 H245.1 Z" fill="url(#pf242)"/>
<path d="M255.0 756.3 V766.3" stroke="#9aa2b0" stroke-width="0.9"/>
<path d="M245.1 766.3 H255.0" stroke="#b0b8c4" stroke-width="0.7"/>
</svg>
<svg class="a" style="left:347px;top:751px" width="36" height="17" viewBox="347 751 36 17">
<defs><linearGradient id="pf348" x1="0" y1="1" x2="1" y2="0"><stop offset="0" stop-color="#f8f9fc"/><stop offset="0.6" stop-color="#e4e8f0"/><stop offset="1" stop-color="#a8b0bc"/></linearGradient></defs>
<path d="M362 753 H381.3 V768 H348 V767 Z" fill="#dce5f2"/>
<path d="M380.8 753.5 V768" stroke="#b0b8c8" stroke-width="1"/>
<path d="M360.5 756.3 V766.3 H350.6 Z" fill="url(#pf348)"/>
<path d="M360.5 756.3 V766.3" stroke="#9aa2b0" stroke-width="0.9"/>
<path d="M350.6 766.3 H360.5" stroke="#b0b8c4" stroke-width="0.7"/>
</svg>
<svg class="a" style="left:455px;top:751px" width="44" height="17" viewBox="455 751 44 17">
<defs><linearGradient id="scr" x1="0" y1="0" x2="1" y2="1"><stop offset="0" stop-color="#d4e0f0"/><stop offset="1" stop-color="#5a80b4"/></linearGradient></defs>
<rect x="455.6" y="752.1" width="42.1" height="16" fill="#d8def0"/>
<rect x="495.5" y="753" width="2.2" height="15" fill="#9aa8c0"/>
<rect x="457.6" y="755" width="37.5" height="13" fill="url(#scr)"/>
<rect x="457.6" y="755" width="37.5" height="1.2" fill="#4a6080"/>
<path d="M462 768 L463 762 L466 760 L467.5 757 L470.5 759 L473.5 756.8 L475 760 L478.5 760.5 L479.5 764 L483.5 766 L484 768 Z" fill="#ecdc5a"/>
<circle cx="473" cy="768" r="4.5" fill="#c09050"/>
</svg>
<svg class="a" style="left:558px;top:755px" width="41" height="13" viewBox="558 755 41 13">
<rect x="558.8" y="755.6" width="39.2" height="12.4" fill="#8cdc78"/>
<rect x="559.4" y="755.6" width="5.2" height="12.4" fill="#54aa42"/>
<rect x="591" y="755.6" width="7" height="12.4" fill="#e4dca0"/>
<rect x="592.5" y="755.6" width="1.2" height="12.4" fill="#a09060"/>
<path d="M584.5 755.6 L591 762" stroke="#6a8a40" stroke-width="1"/>
<path d="M584.5 755.6 H591 V762 Z" fill="#f0d060"/>
<circle cx="576.5" cy="770" r="4.6" fill="none" stroke="#4a9a38" stroke-width="1.6"/>
<circle cx="576.5" cy="770" r="3" fill="#e6f0a0"/>
</svg>
<div class="a" style="left:0;top:766px;width:1px;height:2px;background:#111"></div>
</body></html>
